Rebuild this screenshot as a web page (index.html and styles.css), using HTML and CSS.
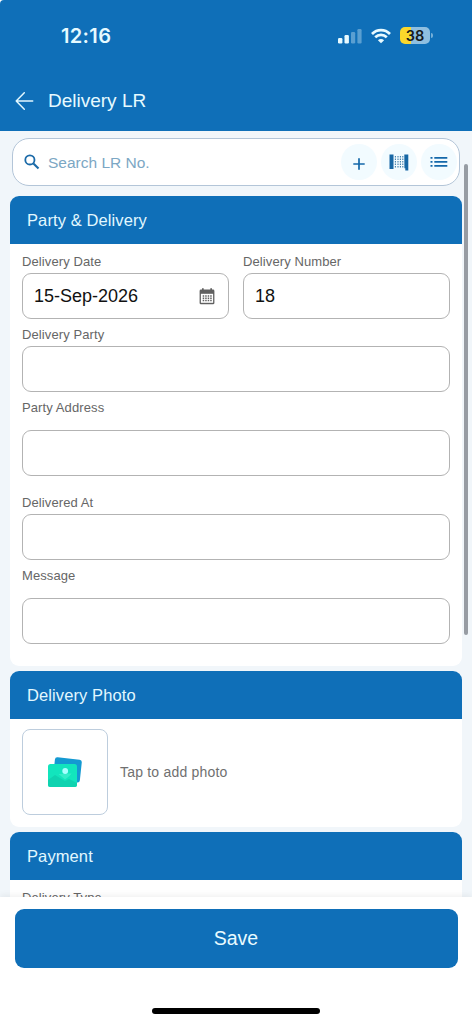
FILE: index.html
```html
<!DOCTYPE html>
<html lang="en">
<head>
<meta charset="utf-8">
<title>Delivery LR</title>
<link rel="stylesheet" href="styles.css">
</head>
<body>
<div class="screen">
  <header class="top">
    <div class="status">
      <span class="time">12:16</span>
      <div class="indicators">
        <svg class="signal" width="24" height="16" viewBox="0 0 24 16" fill="#e8faff"><rect x="0" y="10" width="4.4" height="5.500" rx="1.2"/><rect x="6.5" y="7" width="4.4" height="8.500" rx="1.2"/><rect x="13" y="4" width="4.2" height="11.500" rx="1.2" opacity=".35"/><rect x="19.4" y="1" width="4.2" height="14.500" rx="1.2" opacity=".35"/></svg>
        <svg class="wifi" width="20" height="16" viewBox="0 0 20 16" fill="none" stroke="#e8faff" stroke-width="2.7"><path d="M1 6C6 .8 14 .8 19 6"/><path d="M4.2 9.3c3.3-3.2 8.3-3.2 11.6 0"/><path d="M10 15.3 6.9 12.2c1.800-1.600 4.400-1.600 6.200 0z" fill="#e8faff" stroke="none"/></svg>
        <div class="battery"><span class="level">38</span><i class="cap"></i></div>
      </div>
    </div>
    <div class="titlebar">
      <svg width="19" height="20" viewBox="0 0 19 20" fill="none" stroke="#e2f8ff" stroke-width="1.5" stroke-linecap="round" stroke-linejoin="round"><path d="M17.7 10H1.2M9.3 1.8 1.2 10l8.1 8.2"/></svg>
      <h1>Delivery LR</h1>
    </div>
  </header>

  <main class="content">
    <div class="search">
      <svg class="lens" width="16" height="16" viewBox="0 0 16 16" fill="none" stroke="#1b6aa8"><circle cx="5.9" cy="5.9" r="4.6" stroke-width="1.8"/><path d="m9.4 9.4 5.1 5.1" stroke-width="2.1"/></svg>
      <span class="hint">Search LR No.</span>
      <div class="tools">
        <span class="tool plus"><svg width="12" height="12" viewBox="0 0 12 12" stroke="#1468aa" stroke-width="1.7"><path d="M6 .3v11.4M.3 6h11.4"/></svg></span>
        <span class="tool"><svg width="20" height="17" viewBox="0 0 20 17"><path d="M.5.5h4v14.5h-4zM15.3.5h4v16h-3v-2.2h-.9z" fill="#1767a5"/><path d="M6.4 2v12M9 2v12M11.4 2v12M13.8 2v12" stroke="#3f7da9" stroke-width="1.1" stroke-dasharray="1.5 1"/></svg></span>
        <span class="tool"><svg width="18" height="12" viewBox="0 0 18 12" fill="#1468aa"><path d="M.5 1h2v1.700h-2zM4.300 1h13v1.700h-13zM.5 5h2v1.700h-2zM4.300 5h13v1.700h-13zM.5 9h2v1.700h-2zM4.300 9h13v1.700h-13z"/></svg></span>
      </div>
    </div>

    <section class="card">
      <h2>Party &amp; Delivery</h2>
      <div class="form">
        <div class="pair">
          <div class="field"><label>Delivery Date</label>
            <div class="input"><span>15-Sep-2026</span>
              <svg width="16" height="17" viewBox="0 0 16 17"><path d="M2 1.5h1V.2h1.7v1.3h6.6V.2H13v1.3h1a1.4 1.4 0 0 1 1.4 1.4v12a1.4 1.4 0 0 1-1.4 1.4H2A1.4 1.4 0 0 1 .6 14.9V2.9A1.4 1.4 0 0 1 2 1.5z" fill="#606060"/><path d="M1.9 5.8h12.2v9H1.9z" fill="#fff"/><path d="M3.7 8h9M3.7 10.3h9M3.7 12.6h9" stroke="#606060" stroke-width="1.5" stroke-dasharray="1.5 1"/></svg>
            </div>
          </div>
          <div class="field"><label>Delivery Number</label><div class="input"><span>18</span></div></div>
        </div>
        <div class="field"><label>Delivery Party</label><div class="input"></div></div>
        <div class="field area"><label>Party Address</label><div class="input"></div></div>
        <div class="field spaced"><label>Delivered At</label><div class="input"></div></div>
        <div class="field area"><label>Message</label><div class="input"></div></div>
      </div>
    </section>

    <section class="card">
      <h2>Delivery Photo</h2>
      <div class="photo">
        <div class="thumb">
          <svg width="36" height="32" viewBox="0 0 36 32"><rect x="7" y="2.5" width="27" height="23" rx="2.5" fill="#1499d2" transform="rotate(6 21 13)"/><rect x="1" y="8" width="29" height="23" rx="2.5" fill="#12e5bd"/><path d="M1 24 8 19l5 3 5 3 4-2 8 4v1.500a2.500 2.500 0 0 1-2.500 2.500h-24A2.500 2.500 0 0 1 1 28.500z" fill="#0fd3b0"/><path d="m11.500 18 6.500 5.500 4.500-3.500 2-2.500" fill="#35edc9"/><circle cx="18.200" cy="15" r="2.900" fill="#a9ffff"/></svg>
        </div>
        <span>Tap to add photo</span>
      </div>
    </section>

    <section class="card">
      <h2>Payment</h2>
      <div class="form"><div class="field"><label>Delivery Type</label><div class="input"></div></div></div>
    </section>
    <i class="scrollbar"></i>
  </main>

  <footer class="bottom">
    <button class="save">Save</button>
    <i class="home"></i>
  </footer>
</div>
</body>
</html>
```
FILE: styles.css
```css
* { box-sizing: border-box; }
body { margin: 0; background: #fff; font-family: "Liberation Sans", Arial, sans-serif; }
.screen { width: 472px; height: 1024px; display: flex; flex-direction: column; overflow: hidden; }

.top { height: 131px; flex: none; background: #0f6fb8; border-top-left-radius: 4px; color: #e6faff; }
.status { height: 71px; padding: 0 39px 0 61px; display: flex; align-items: center; justify-content: space-between; }
.time { font: 600 20px/24px Inter, sans-serif; letter-spacing: .35px; }
.indicators { display: flex; align-items: center; }
.wifi { margin-left: 9px; }
.battery { margin-left: 9px; display: flex; align-items: center; gap: 1px; }
.level { width: 30px; height: 17px; border-radius: 5px; background: linear-gradient(90deg, #fbd72b 38%, #8fbfe0 38%); color: #16191c; font: 600 14.5px/17px Inter, sans-serif; text-align: center; }
.cap { width: 2px; height: 5px; border-radius: 0 2px 2px 0; background: #74afd8; }
.titlebar { height: 60px; padding-left: 15px; display: flex; align-items: center; gap: 14px; }
h1 { margin: 0; font-size: 19px; font-weight: 400; line-height: 24px; }

.content { position: relative; flex: 1; min-height: 0; overflow: hidden; padding: 7px 10px 0; background: #f1f6fa; }
.search { height: 48px; margin: 0 2px 10px; padding: 0 2px 0 11px; display: flex; align-items: center; background: #fff; border: 1px solid #b3c5d8; border-radius: 17px; }
.hint { margin-left: 8px; padding-top: 2px; font-size: 15.5px; line-height: 18px; color: #7ca7c4; }
.tools { margin-left: auto; display: flex; gap: 4px; }
.tool { width: 36px; height: 36px; border-radius: 50%; background: #f2fbff; display: flex; align-items: center; justify-content: center; }
.plus { padding-top: 3px; }

.card { margin-bottom: 5px; border-radius: 9px; background: #fff; overflow: hidden; }
h2 { margin: 0; height: 48px; padding-left: 17px; background: #0f6fb8; color: #e2f8ff; font-size: 16.5px; font-weight: 400; line-height: 48px; letter-spacing: .1px; }
.form { padding: 8px 12px 22px; display: flex; flex-direction: column; gap: 6px; }
.pair { display: grid; grid-template-columns: 1fr 1fr; gap: 14px; }
.field { display: flex; flex-direction: column; gap: 3px; }
.area { gap: 14px; }
.spaced { margin-top: 11px; }
label { height: 18px; line-height: 19px; font-size: 13px; letter-spacing: .1px; color: #666; }
.input { height: 46px; padding: 0 13px 0 11px; display: flex; align-items: center; justify-content: space-between; border: 1px solid #b3b3b3; border-radius: 9px; color: #111; font-size: 18px; }
.input span { padding-top: 1px; }
.photo { padding: 10px 12px 12px; display: flex; align-items: center; gap: 12px; color: #707070; font-size: 14px; letter-spacing: .2px; }
.thumb { width: 86px; height: 86px; display: flex; align-items: center; justify-content: center; border: 1px solid #bdcddd; border-radius: 8px; }
.scrollbar { position: absolute; right: 4px; top: 33px; width: 4px; height: 471px; border-radius: 2px; background: #979ca3; }

.bottom { position: relative; height: 127px; flex: none; padding: 12px 14.5px 0; display: flex; flex-direction: column; align-items: center; background: #fff; box-shadow: 0 -2px 6px rgba(0, 0, 0, .06); }
.save { width: 100%; height: 59px; padding: 0; border: 0; border-radius: 9px; background: #0f6fb8; color: #e9fbff; font: 400 19.5px "Liberation Sans", Arial, sans-serif; }
.home { width: 168px; height: 6px; margin-top: 40px; border-radius: 3px; background: #000; }
```
